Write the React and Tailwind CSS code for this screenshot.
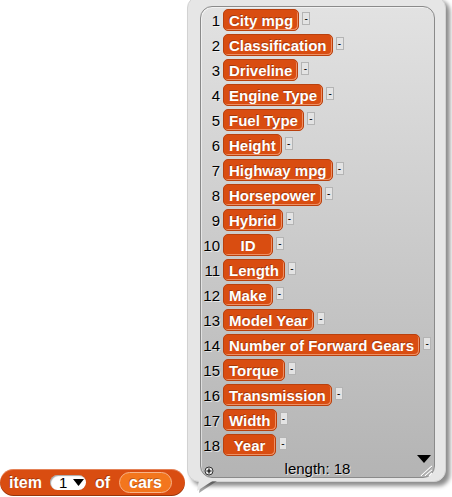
import React from 'react';

const columns = [
  { label: 'City mpg' },
  { label: 'Classification' },
  { label: 'Driveline' },
  { label: 'Engine Type' },
  { label: 'Fuel Type' },
  { label: 'Height' },
  { label: 'Highway mpg' },
  { label: 'Horsepower' },
  { label: 'Hybrid' },
  { label: 'ID', wide: 'w-[50px] justify-center' },
  { label: 'Length' },
  { label: 'Make' },
  { label: 'Model Year' },
  { label: 'Number of Forward Gears' },
  { label: 'Torque' },
  { label: 'Transmission' },
  { label: 'Width' },
  { label: 'Year', wide: 'w-[53px] justify-center' },
];

function Row({ index, label, wide }) {
  return (
    <div className="h-[25px] flex items-start">
      <div className="h-[22px] flex items-center">
        <span className="w-[19px] text-right text-[15px] leading-none text-black [text-shadow:1px_1px_0_rgba(255,255,255,0.6)]">
          {index}
        </span>
        <div
          className={`ml-[3px] h-[22px] flex items-center px-[5px] rounded-[5px] bg-[#d94d11] border border-[#b9400d] shadow-[inset_-1px_-1px_0_rgba(255,200,170,0.55)] text-white font-bold text-[15px] leading-none whitespace-nowrap [text-shadow:-1px_-1px_0_rgba(0,0,0,0.25)] ${wide || ''}`}
        >
          {label}
        </div>
        <div className="ml-[3px] -mt-[3px] w-[8px] h-[13px] bg-[#e3e3e3] border border-[#b4b4b4] flex items-center justify-center text-[10px] leading-none text-black">
          -
        </div>
      </div>
    </div>
  );
}

function ReporterBlock() {
  return (
    <div className="mb-[1px] h-[27px] w-[185px] shrink-0 flex items-center pl-[9px] rounded-full bg-[#d94d11] shadow-[inset_0_-1px_0_rgba(0,0,0,0.3),inset_0_1px_0_rgba(255,255,255,0.3)] text-white font-bold text-[16px] leading-none [text-shadow:-1px_-1px_0_rgba(0,0,0,0.25)]">
      <span>item</span>
      <div className="ml-[8px] w-[36px] h-[15px] rounded-full bg-white flex items-center pl-[9px] shadow-[inset_1px_1px_1px_rgba(0,0,0,0.35)]">
        <span className="text-black font-normal text-[15px] [text-shadow:none]">1</span>
        <svg width="11" height="8" viewBox="0 0 11 8" className="ml-[6px]">
          <polygon points="0,0 11,0 5.5,7" fill="#000" />
        </svg>
      </div>
      <span className="ml-[9px]">of</span>
      <div className="ml-[9px] w-[53px] h-[21px] rounded-full bg-[#f3761d] border border-[#f8b489] flex items-center justify-center">
        cars
      </div>
    </div>
  );
}

export default function App() {
  return (
    <div className="w-[452px] h-[497px] overflow-hidden bg-white flex items-end font-['Liberation_Sans',Arial,sans-serif]">
      <ReporterBlock />

      <div className="ml-[2px] w-[259px] shrink-0 flex flex-col">
        {/* speech bubble */}
        <div className="rounded-[12px] bg-[#e6e6e6] border border-[#d2d2d2] shadow-[4px_4px_4px_rgba(0,0,0,0.45)] pt-[9px] pb-[3px] pl-[12px] pr-[10px]">
          <div className="relative rounded-[12px] border border-[#8a8a8a] bg-gradient-to-b from-[#e2e2e2] to-[#b4b4b4] shadow-[inset_1px_1px_0_rgba(255,255,255,0.5)]">
            <div className="pt-[2px] pl-[0px]">
              {columns.map((c, i) => (
                <Row key={c.label} index={i + 1} label={c.label} wide={c.wide} />
              ))}
            </div>

            <div className="relative h-[18px] flex items-center justify-center text-[15px] leading-none text-black [text-shadow:1px_1px_0_rgba(255,255,255,0.6)]">
              length: 18
              <svg width="10" height="10" viewBox="0 0 10 10" className="absolute left-[3px] top-[7px]">
                <circle cx="5" cy="5" r="4" fill="#e8e8e8" stroke="#333" strokeWidth="1" />
                <path d="M5 2.5v5M2.5 5h5" stroke="#000" strokeWidth="1.2" />
              </svg>
              <svg width="14" height="9" viewBox="0 0 14 9" className="absolute right-[3px] -top-[4px]">
                <polygon points="0,0 14,0 7,8" fill="#000" />
              </svg>
              <svg width="14" height="12" viewBox="0 0 14 12" className="absolute right-[2px] bottom-[1px]">
                <path d="M3 12L14 2M7 12L14 6M11 12L14 9" stroke="#fff" strokeWidth="1.2" />
                <path d="M4 12L14 3M8 12L14 7" stroke="#888" strokeWidth="0.6" />
              </svg>
            </div>
          </div>
        </div>

        {/* bubble tail */}
        <svg width="32" height="17" viewBox="0 0 32 17" className="-mt-[2px] overflow-visible">
          <polygon points="14,1 30,1 12,13" fill="rgba(0,0,0,0.35)" />
          <polygon points="12,0 27,0 10,11" fill="#e6e6e6" />
        </svg>
      </div>
    </div>
  );
}
